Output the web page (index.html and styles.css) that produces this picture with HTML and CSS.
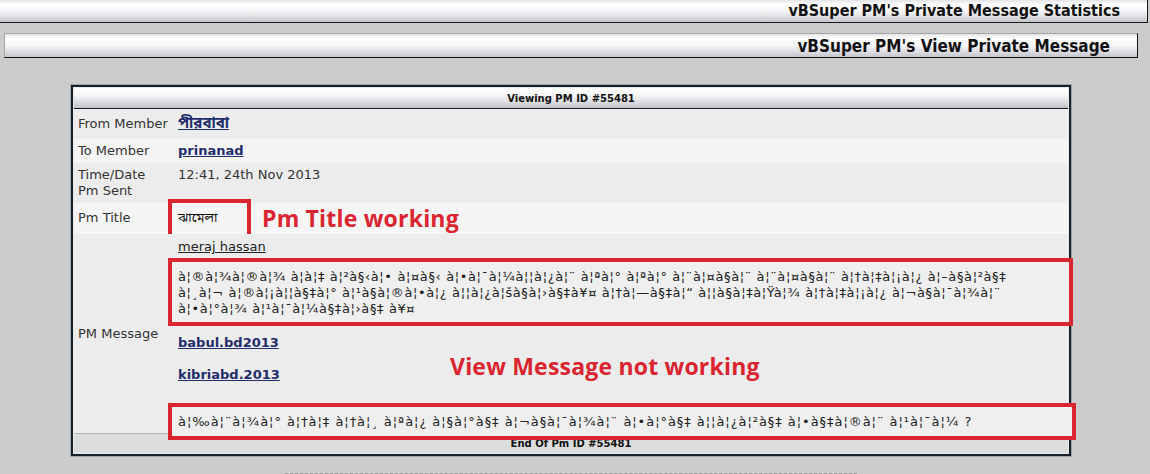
FILE: index.html
```html
<!DOCTYPE html>
<html>
  <head>
    <meta charset="utf-8">
    <title>vBSuper PM's View Private Message</title>
    <link rel="stylesheet" href="styles.css">
  </head>
  <body>
    <div class="page-title">vBSuper PM's Private Message Statistics</div>

    <div class="wrap">
      <div class="section-title">vBSuper PM's View Private Message</div>

      <div class="pm-box">
        <div class="pm-inner">
          <div class="pm-head">Viewing PM ID #55481</div>

          <div class="row row-from shade">
            <div class="label">From Member</div>
            <div class="value"><a class="member bn" href="#">পীরবাবা</a></div>
          </div>

          <div class="row row-to">
            <div class="label">To Member</div>
            <div class="value"><a class="member" href="#">prinanad</a></div>
          </div>

          <div class="row row-time shade">
            <div class="label">Time/Date<br>Pm Sent</div>
            <div class="value">12:41, 24th Nov 2013</div>
          </div>

          <div class="row row-title">
            <div class="label">Pm Title</div>
            <div class="value title-line">
              <div class="title-text"><span class="mark bn">ঝামেলা</span></div>
              <div class="note">Pm Title working</div>
            </div>
          </div>

          <div class="row row-msg shade">
            <div class="label">PM Message</div>
            <div class="value">
              <div class="quoted"><a class="plain" href="#">meraj hassan</a></div>
              <div class="mark-box">à¦®à¦¾à¦®à¦¾ à¦à¦‡ à¦²à§‹à¦• à¦¤à§‹ à¦•à¦¯à¦¼à¦¦à¦¿à¦¨ à¦ªà¦° à¦ªà¦° à¦¨à¦¤à§à¦¨ à¦¨à¦¤à§à¦¨ à¦†à¦‡à¦¡à¦¿ à¦–à§à¦²à§‡<br>à¦¸à¦¬ à¦®à¦¡à¦¦à§‡à¦° à¦¹à§à¦®à¦•à¦¿ à¦¦à¦¿à¦šà§à¦›à§‡à¥¤ à¦†à¦—à§‡à¦“ à¦¦à§à¦‡à¦Ÿà¦¾ à¦†à¦‡à¦¡à¦¿ à¦¬à§à¦¯à¦¾à¦¨<br>à¦•à¦°à¦¾ à¦¹à¦¯à¦¼à§‡à¦›à§‡ à¥¤</div>
              <div class="sender"><a class="member" href="#">babul.bd2013</a></div>
              <div class="sender sender-2"><a class="member" href="#">kibriabd.2013</a></div>
              <div class="mark-box mark-last">à¦‰à¦¨à¦¾à¦° à¦†à¦‡ à¦†à¦¸ à¦ªà¦¿ à¦§à¦°à§‡ à¦¬à§à¦¯à¦¾à¦¨ à¦•à¦°à§‡ à¦¦à¦¿à¦²à§‡ à¦•à§‡à¦®à¦¨ à¦¹à¦¯à¦¼ ?</div>
            </div>
            <div class="note note-msg">View Message not working</div>
          </div>

          <div class="pm-foot">End Of Pm ID #55481</div>
        </div>
      </div>

      <div class="divider"></div>
    </div>
  </body>
</html>
```

FILE: styles.css
```css
body {
  margin: 0;
  background-color: #cccccc;
  font-family: "DejaVu Sans", Verdana, sans-serif;
  font-size: 13px;
  color: #333;
}
a {
  text-decoration: underline;
}
.bn {
  font-family: "Noto Sans Bengali", "Lohit Bengali", "Noto Sans", "DejaVu Sans", sans-serif;
}
.page-title,
.section-title {
  text-align: right;
  padding-right: 27px;
  font-family: "DejaVu Sans Condensed", "DejaVu Sans", sans-serif;
  font-stretch: condensed;
  font-weight: bold;
  font-size: 16px;
  color: #111;
  background: linear-gradient(#e4e4e8, #ffffff 20%, #f6f6f8 50%, #c6c6ce);
}
.page-title {
  height: 22px;
  line-height: 22px;
  margin-right: 2px;
  border-bottom: 1px solid #1a1a1a;
  border-right: 1px solid #1a1a1a;
}
.wrap {
  margin: 10px 12px 0 4px;
}
.section-title {
  height: 23px;
  line-height: 24px;
  font-size: 17px;
  border: 1px solid #111;
  border-top-color: #a4a4a4;
  border-left-color: #a4a4a4;
}
.pm-box {
  width: 1002px;
  box-sizing: border-box;
  margin: 26px auto 0;
  border: 1px solid #9ba5ab;
}
.pm-inner {
  border: 2px solid #16202a;
  padding: 1px;
  background-color: #e9e9e9;
}
.pm-head,
.pm-foot {
  text-align: center;
  font-weight: bold;
  font-size: 10px;
  color: #111;
}
.pm-head {
  height: 20px;
  line-height: 21px;
  border-bottom: 1px solid #1a1a1a;
  background: linear-gradient(#ffffff, #f7f7f8 35%, #dcdde0 70%, #bfc2c7);
}
.row {
  position: relative;
  display: grid;
  grid-template-columns: 100px 1fr;
  align-items: center;
  background-color: #f5f5f5;
}
.row.shade {
  background-color: #ececec;
}
.label,
.value {
  padding: 0 4px;
  line-height: 16px;
}
.row-from {
  padding: 7px 0;
  line-height: 17px;
}
.row-to {
  padding: 4px 0;
}
.row-time {
  align-items: start;
  padding: 4px 0;
}
.row-title {
  padding: 3px 0 4px;
}
.member {
  font-weight: bold;
  color: #1f2d6b;
}
.member.bn {
  font-size: 15px;
}
.plain {
  color: #222;
}
.title-line {
  display: flex;
  align-items: center;
}
.title-text {
  width: 84px;
  flex-shrink: 0;
  color: #111;
}
.mark {
  margin-left: -10px;
  padding: 7px 30px 7px 6px;
  border: 4px solid #da2430;
}
.note {
  font-family: "Open Sans", "Noto Sans", sans-serif;
  font-weight: bold;
  font-size: 23px;
  line-height: 24px;
  letter-spacing: 0.2px;
  color: #da2430;
  white-space: nowrap;
}
.note-msg {
  position: absolute;
  left: 376px;
  top: 120px;
}
.row-msg .value {
  padding-top: 5px;
}
.quoted {
  line-height: 16px;
}
.mark-box {
  margin: 3px -9px 0 -10px;
  padding: 7px 0 5px 6px;
  border: 4px solid #da2430;
  line-height: 16px;
  letter-spacing: 0.62px;
  white-space: nowrap;
  color: #222;
  background-color: #efefef;
}
.sender {
  margin-top: 9px;
}
.sender-2 {
  margin-top: 16px;
}
.mark-box.mark-last {
  margin-top: 20px;
  margin-right: -12px;
  margin-bottom: -7px;
  padding: 6px 0 6px 6px;
  line-height: 17px;
  letter-spacing: 0.95px;
  position: relative;
}
.pm-foot {
  height: 19px;
  line-height: 20px;
  border-top: 1px solid #b2b2b2;
  background-color: #dcdddd;
}
.divider {
  width: 572px;
  margin: 16px auto 0;
  border-top: 1px dashed #9a9a9a;
}
```
